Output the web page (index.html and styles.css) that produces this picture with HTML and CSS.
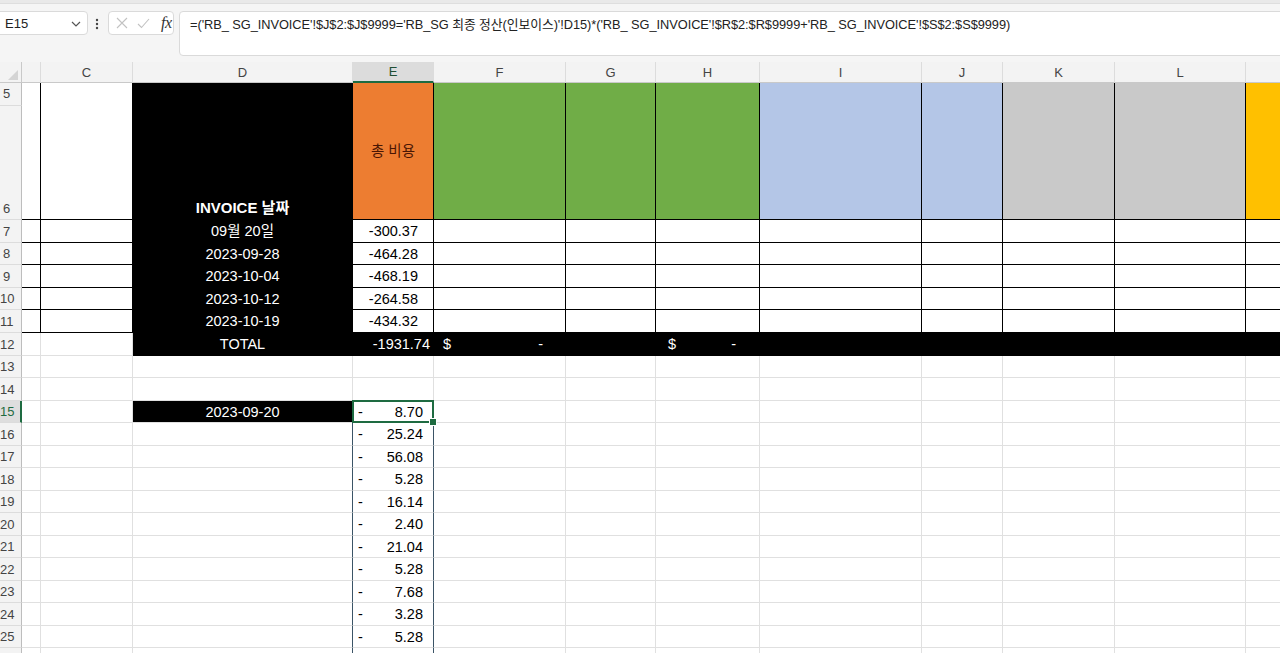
FILE: index.html
```html
<!DOCTYPE html>
<html lang="ko">
<head>
<meta charset="utf-8">
<title>RB_SG 최종 정산(인보이스)</title>
<link rel="stylesheet" href="styles.css">
</head>
<body>
<div class="app">
  <div class="toolbar">
    <div class="namebox">
      <span>E15</span>
      <svg class="chev" width="10" height="6" viewBox="0 0 10 6"><polyline points="1,1 5,5 9,1" fill="none" stroke="#555" stroke-width="1.2"/></svg>
    </div>
    <svg class="vdots" width="4" height="12" viewBox="0 0 4 12"><circle cx="2" cy="2" r="1.2" fill="#444"/><circle cx="2" cy="6" r="1.2" fill="#444"/><circle cx="2" cy="10" r="1.2" fill="#444"/></svg>
    <div class="fxbox">
      <svg width="12" height="12" viewBox="0 0 12 12"><path d="M1 1 L11 11 M11 1 L1 11" stroke="#c2c2c2" stroke-width="1.1" fill="none"/></svg>
      <svg width="13" height="11" viewBox="0 0 13 11"><polyline points="1,6 4.5,9.5 12,1" stroke="#c2c2c2" stroke-width="1.1" fill="none"/></svg>
      <span class="fx">fx</span>
    </div>
    <div class="formula">=('RB_ SG_INVOICE'!$J$2:$J$9999='RB_SG 최종 정산(인보이스)'!D15)*('RB_ SG_INVOICE'!$R$2:$R$9999+'RB_ SG_INVOICE'!$S$2:$S$9999)</div>
  </div>

  <div class="sheet">
    <table class="grid">
      <colgroup>
        <col class="w-rh"><col class="w-b"><col class="w-c"><col class="w-d"><col class="w-e"><col class="w-f"><col class="w-g"><col class="w-h"><col class="w-i"><col class="w-j"><col class="w-k"><col class="w-l"><col class="w-m">
      </colgroup>
      <thead>
        <tr class="hdr">
          <th class="corner"><svg width="10" height="10" viewBox="0 0 10 10"><polygon points="10,0 10,10 0,10" fill="#d4d4d4"/></svg></th>
          <th></th><th>C</th><th>D</th><th class="col-sel">E</th><th>F</th><th>G</th><th>H</th><th>I</th><th>J</th><th>K</th><th>L</th><th></th>
        </tr>
      </thead>
      <tbody>
        <tr class="h23">
          <th class="rh top">5</th>
          <td rowspan="2" class="bk"></td>
          <td rowspan="2" class="bk"></td>
          <td rowspan="2" class="bk dark ctr title">INVOICE 날짜</td>
          <td rowspan="2" class="bk org ctr mid">총 비용</td>
          <td rowspan="2" class="bk grn"></td>
          <td rowspan="2" class="bk grn"></td>
          <td rowspan="2" class="bk grn"></td>
          <td rowspan="2" class="bk blu"></td>
          <td rowspan="2" class="bk blu"></td>
          <td rowspan="2" class="bk gry"></td>
          <td rowspan="2" class="bk gry"></td>
          <td rowspan="2" class="bk gld"></td>
        </tr>
        <tr class="h114"><th class="rh">6</th></tr>

        <tr class="h23"><th class="rh">7</th><td class="bk"></td><td class="bk"></td><td class="bk dark ctr">09월 20일</td><td class="bk num">-300.37</td><td class="bk"></td><td class="bk"></td><td class="bk"></td><td class="bk"></td><td class="bk"></td><td class="bk"></td><td class="bk"></td><td class="bk"></td></tr>
        <tr class="h22"><th class="rh">8</th><td class="bk"></td><td class="bk"></td><td class="bk dark ctr">2023-09-28</td><td class="bk num">-464.28</td><td class="bk"></td><td class="bk"></td><td class="bk"></td><td class="bk"></td><td class="bk"></td><td class="bk"></td><td class="bk"></td><td class="bk"></td></tr>
        <tr class="h23"><th class="rh">9</th><td class="bk"></td><td class="bk"></td><td class="bk dark ctr">2023-10-04</td><td class="bk num">-468.19</td><td class="bk"></td><td class="bk"></td><td class="bk"></td><td class="bk"></td><td class="bk"></td><td class="bk"></td><td class="bk"></td><td class="bk"></td></tr>
        <tr class="h22"><th class="rh">10</th><td class="bk"></td><td class="bk"></td><td class="bk dark ctr">2023-10-12</td><td class="bk num">-264.58</td><td class="bk"></td><td class="bk"></td><td class="bk"></td><td class="bk"></td><td class="bk"></td><td class="bk"></td><td class="bk"></td><td class="bk"></td></tr>
        <tr class="h23"><th class="rh">11</th><td class="bk"></td><td class="bk"></td><td class="bk dark ctr">2023-10-19</td><td class="bk num">-434.32</td><td class="bk"></td><td class="bk"></td><td class="bk"></td><td class="bk"></td><td class="bk"></td><td class="bk"></td><td class="bk"></td><td class="bk"></td></tr>
        <tr class="h23"><th class="rh">12</th><td></td><td></td><td class="bk dark ctr">TOTAL</td><td class="bk dark num tot">-1931.74</td><td class="bk dark"><span class="acct f-acct"><span>$</span><span>-</span></span></td><td class="bk dark"></td><td class="bk dark"><span class="acct h-acct"><span>$</span><span>-</span></span></td><td class="bk dark"></td><td class="bk dark"></td><td class="bk dark"></td><td class="bk dark"></td><td class="bk dark"></td></tr>
        <tr class="h22"><th class="rh">13</th><td></td><td></td><td></td><td></td><td></td><td></td><td></td><td></td><td></td><td></td><td></td><td></td></tr>
        <tr class="h23"><th class="rh">14</th><td></td><td></td><td></td><td></td><td></td><td></td><td></td><td></td><td></td><td></td><td></td><td></td></tr>
        <tr class="h22"><th class="rh row-sel">15</th><td></td><td></td><td class="dark ctr edge-dark">2023-09-20</td><td class="eb sel"><span class="acct e-acct"><span>-</span><span>8.70</span></span></td><td></td><td></td><td></td><td></td><td></td><td></td><td></td><td></td></tr>
        <tr class="h23"><th class="rh">16</th><td></td><td></td><td class="edge"></td><td class="eb"><span class="acct e-acct"><span>-</span><span>25.24</span></span></td><td></td><td></td><td></td><td></td><td></td><td></td><td></td><td></td></tr>
        <tr class="h22"><th class="rh">17</th><td></td><td></td><td class="edge"></td><td class="eb"><span class="acct e-acct"><span>-</span><span>56.08</span></span></td><td></td><td></td><td></td><td></td><td></td><td></td><td></td><td></td></tr>
        <tr class="h23"><th class="rh">18</th><td></td><td></td><td class="edge"></td><td class="eb"><span class="acct e-acct"><span>-</span><span>5.28</span></span></td><td></td><td></td><td></td><td></td><td></td><td></td><td></td><td></td></tr>
        <tr class="h22"><th class="rh">19</th><td></td><td></td><td class="edge"></td><td class="eb"><span class="acct e-acct"><span>-</span><span>16.14</span></span></td><td></td><td></td><td></td><td></td><td></td><td></td><td></td><td></td></tr>
        <tr class="h23"><th class="rh">20</th><td></td><td></td><td class="edge"></td><td class="eb"><span class="acct e-acct"><span>-</span><span>2.40</span></span></td><td></td><td></td><td></td><td></td><td></td><td></td><td></td><td></td></tr>
        <tr class="h22"><th class="rh">21</th><td></td><td></td><td class="edge"></td><td class="eb"><span class="acct e-acct"><span>-</span><span>21.04</span></span></td><td></td><td></td><td></td><td></td><td></td><td></td><td></td><td></td></tr>
        <tr class="h23"><th class="rh">22</th><td></td><td></td><td class="edge"></td><td class="eb"><span class="acct e-acct"><span>-</span><span>5.28</span></span></td><td></td><td></td><td></td><td></td><td></td><td></td><td></td><td></td></tr>
        <tr class="h22"><th class="rh">23</th><td></td><td></td><td class="edge"></td><td class="eb"><span class="acct e-acct"><span>-</span><span>7.68</span></span></td><td></td><td></td><td></td><td></td><td></td><td></td><td></td><td></td></tr>
        <tr class="h23"><th class="rh">24</th><td></td><td></td><td class="edge"></td><td class="eb"><span class="acct e-acct"><span>-</span><span>3.28</span></span></td><td></td><td></td><td></td><td></td><td></td><td></td><td></td><td></td></tr>
        <tr class="h22"><th class="rh">25</th><td></td><td></td><td class="edge"></td><td class="eb"><span class="acct e-acct"><span>-</span><span>5.28</span></span></td><td></td><td></td><td></td><td></td><td></td><td></td><td></td><td></td></tr>
        <tr class="h23"><th class="rh"></th><td></td><td></td><td class="edge"></td><td class="eb"></td><td></td><td></td><td></td><td></td><td></td><td></td><td></td><td></td></tr>
      </tbody>
    </table>
  </div>
</div>
</body>
</html>
```

FILE: styles.css
```css
* { box-sizing: border-box; }

html, body {
  margin: 0;
  padding: 0;
  background: #ffffff;
  overflow: hidden;
}

body {
  font-family: "Liberation Sans", "Noto Sans CJK KR", sans-serif;
  color: #000;
}

.app {
  width: 1280px;
  height: 653px;
  overflow: hidden;
  display: flex;
  flex-direction: column;
}

/* ---------- formula bar ---------- */
.toolbar {
  height: 62px;
  flex: none;
  display: flex;
  align-items: flex-start;
  background: #f5f5f5;
  border-top: 3px solid #e9e9e9;
  box-shadow: inset 0 1px 0 #dedede;
  padding-top: 8px;
}

.namebox {
  width: 92px;
  height: 24px;
  margin-left: -4px;
  background: #fff;
  border: 1px solid #dadada;
  border-radius: 4px;
  display: flex;
  align-items: center;
  justify-content: space-between;
  padding: 0 6px 0 8px;
  font-size: 13px;
  color: #222;
}

.chev { margin-top: 1px; }

.vdots {
  margin: 7px 0 0 7px;
}

.fxbox {
  width: 66px;
  height: 24px;
  margin-left: 9px;
  background: #fff;
  border: 1px solid #dadada;
  border-radius: 4px;
  display: flex;
  align-items: center;
  gap: 9px;
  padding-left: 7px;
}

.fx {
  font-family: "Liberation Serif", serif;
  font-style: italic;
  font-size: 16px;
  color: #333;
  margin-left: 2px;
  letter-spacing: -0.5px;
}

.formula {
  flex: 1;
  height: 45px;
  margin-left: 5px;
  margin-right: -6px;
  background: #fff;
  border: 1px solid #dadada;
  border-radius: 4px;
  padding: 4px 0 0 10px;
  font-size: 12.8px;
  letter-spacing: -0.05px;
  line-height: 18px;
  color: #222;
  white-space: nowrap;
  overflow: hidden;
}

/* ---------- sheet ---------- */
.sheet {
  flex: 1;
  overflow: hidden;
  background: #fff;
}

.grid {
  table-layout: fixed;
  border-collapse: separate;
  border-spacing: 0;
  width: 1346px;
  font-size: 14.5px;
}

.w-rh { width: 22px; }
.w-b { width: 19px; }
.w-c { width: 92px; }
.w-d { width: 220px; }
.w-e { width: 81px; }
.w-f { width: 132px; }
.w-g { width: 90px; }
.w-h { width: 104px; }
.w-i { width: 162px; }
.w-j { width: 81px; }
.w-k { width: 112px; }
.w-l { width: 131px; }
.w-m { width: 100px; }

.grid td {
  padding: 0 4px;
  border-right: 1px solid #e0e0e0;
  border-bottom: 1px solid #e0e0e0;
  white-space: nowrap;
  overflow: hidden;
  vertical-align: middle;
  line-height: 18px;
}

/* column headers */
.hdr { height: 21px; }

.hdr th {
  background: #f3f3f3;
  border-right: 1px solid #dcdcdc;
  border-bottom: 1px solid #c9c9c9;
  font-weight: normal;
  font-size: 13px;
  color: #444;
  padding: 1px 0 0;
  line-height: 16px;
}

.hdr th.corner {
  text-align: right;
  vertical-align: bottom;
  padding: 0 3px 2px 0;
  border-right-color: #c9c9c9;
}

.hdr th.corner svg { display: block; margin-left: auto; }

.hdr th.col-sel {
  background: #dcdcdc;
  color: #1f4e33;
  border-bottom: 2px solid #1e6b41;
}

/* row headers */
.rh {
  background: #f3f3f3;
  border-right: 1px solid #bdbdbd;
  border-bottom: 1px solid #dcdcdc;
  font-weight: normal;
  font-size: 13px;
  color: #444;
  text-align: center;
  vertical-align: bottom;
  padding: 0 8px 2px 0;
  line-height: 16px;
  white-space: nowrap;
  overflow: hidden;
}

.rh.top { vertical-align: middle; padding-bottom: 0; }

.rh.row-sel {
  background: #dedede;
  color: #1e6b41;
  border-right: 2px solid #1e6b41;
}

/* row heights */
.h22 { height: 22px; }
.h23 { height: 23px; }
.h114 { height: 114px; }

/* borders */
.grid td.bk {
  border-right-color: #000;
  border-bottom-color: #000;
}

.grid td.edge { border-right-color: #3b5466; }
.grid td.edge-dark { border-right-color: #000; border-bottom-color: #e0e0e0; }
.grid td.eb { border-right-color: #3b5466; }

/* fills */
.dark { background: #000; color: #fff; }
.org { background: #ed7d31; color: #4a1604; }
.grn { background: #70ad47; }
.blu { background: #b4c6e7; }
.gry { background: #c9c9c9; }
.gld { background: #ffc000; }

/* alignment */
.ctr { text-align: center; }
.num { text-align: right; }
.grid td.num { padding-right: 15px; }
.grid td.tot { padding-right: 3px; }

.grid td.title {
  vertical-align: bottom;
  font-weight: bold;
  font-size: 15px;
  padding-bottom: 2px;
}

.grid td.mid { vertical-align: middle; padding-top: 0; }

/* accounting format: sign/currency left, value right */
.acct {
  display: flex;
  justify-content: space-between;
}

.f-acct { margin: 0 18px 0 5px; }
.h-acct { margin: 0 19px 0 8px; }
.e-acct { margin: 0 6px 0 1px; }

/* active cell */
.grid td.sel {
  position: relative;
  overflow: visible;
}

.grid td.sel::after {
  content: "";
  position: absolute;
  left: -1px;
  top: -1px;
  right: -1px;
  bottom: -1px;
  border: 2px solid #1e6b41;
  pointer-events: none;
}

.grid td.sel::before {
  content: "";
  position: absolute;
  right: -4px;
  bottom: -4px;
  width: 6px;
  height: 6px;
  background: #1e6b41;
  border: 1px solid #fff;
  z-index: 2;
}
```
